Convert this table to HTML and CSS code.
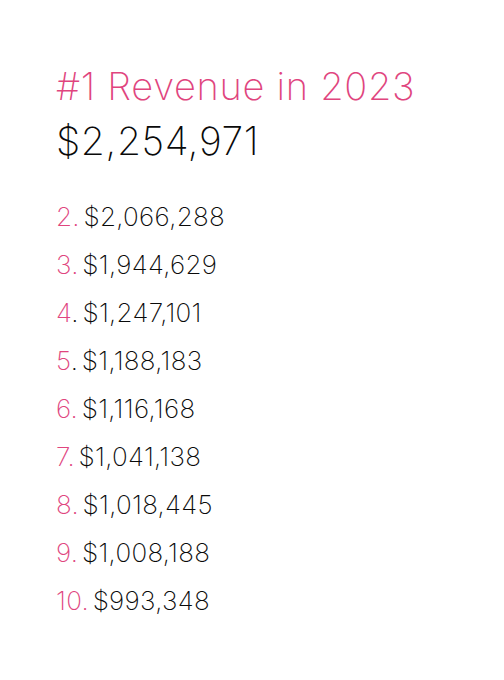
FILE: index.html
```html
<!DOCTYPE html>
<html>
<head>
<meta charset="utf-8">
<link rel="stylesheet" href="styles.css">
</head>
<body>
<main class="card">
  <h1 class="title">#1 Revenue in 2023</h1>
  <p class="top">$2,254,971</p>
  <ol class="list">
    <li class="row"><span class="rank">2.</span> $2,066,288</li>
    <li class="row"><span class="rank">3.</span> $1,944,629</li>
    <li class="row"><span class="rank">4</span>. $1,247,101</li>
    <li class="row"><span class="rank">5</span>. $1,188,183</li>
    <li class="row"><span class="rank">6.</span> $1,116,168</li>
    <li class="row"><span class="rank">7.</span> $1,041,138</li>
    <li class="row"><span class="rank">8.</span> $1,018,445</li>
    <li class="row"><span class="rank">9.</span> $1,008,188</li>
    <li class="row"><span class="rank">10.</span> $993,348</li>
  </ol>
</main>
</body>
</html>
```
FILE: styles.css
```css
html, body {
  margin: 0;
  padding: 0;
  background: #ffffff;
}
body {
  font-family: Inter, "Noto Sans", sans-serif;
  font-weight: 250;
  color: #0a0a0a;
}
.card {
  padding: 63px 56px 0 56px;
}
.title {
  margin: 0;
  font-size: 38px;
  font-weight: 250;
  line-height: 46px;
  color: #e0457e;
  letter-spacing: 0.7px;
}
.top {
  margin: 9px 0 0 0;
  font-size: 39px;
  line-height: 46px;
  letter-spacing: 0.6px;
}
.list {
  list-style: none;
  margin: 29px 0 0 0;
  padding: 0;
}
.row {
  font-size: 26px;
  line-height: 48px;
  letter-spacing: 0.3px;
  word-spacing: -4px;
}
.rank {
  color: #e0457e;
}
```
